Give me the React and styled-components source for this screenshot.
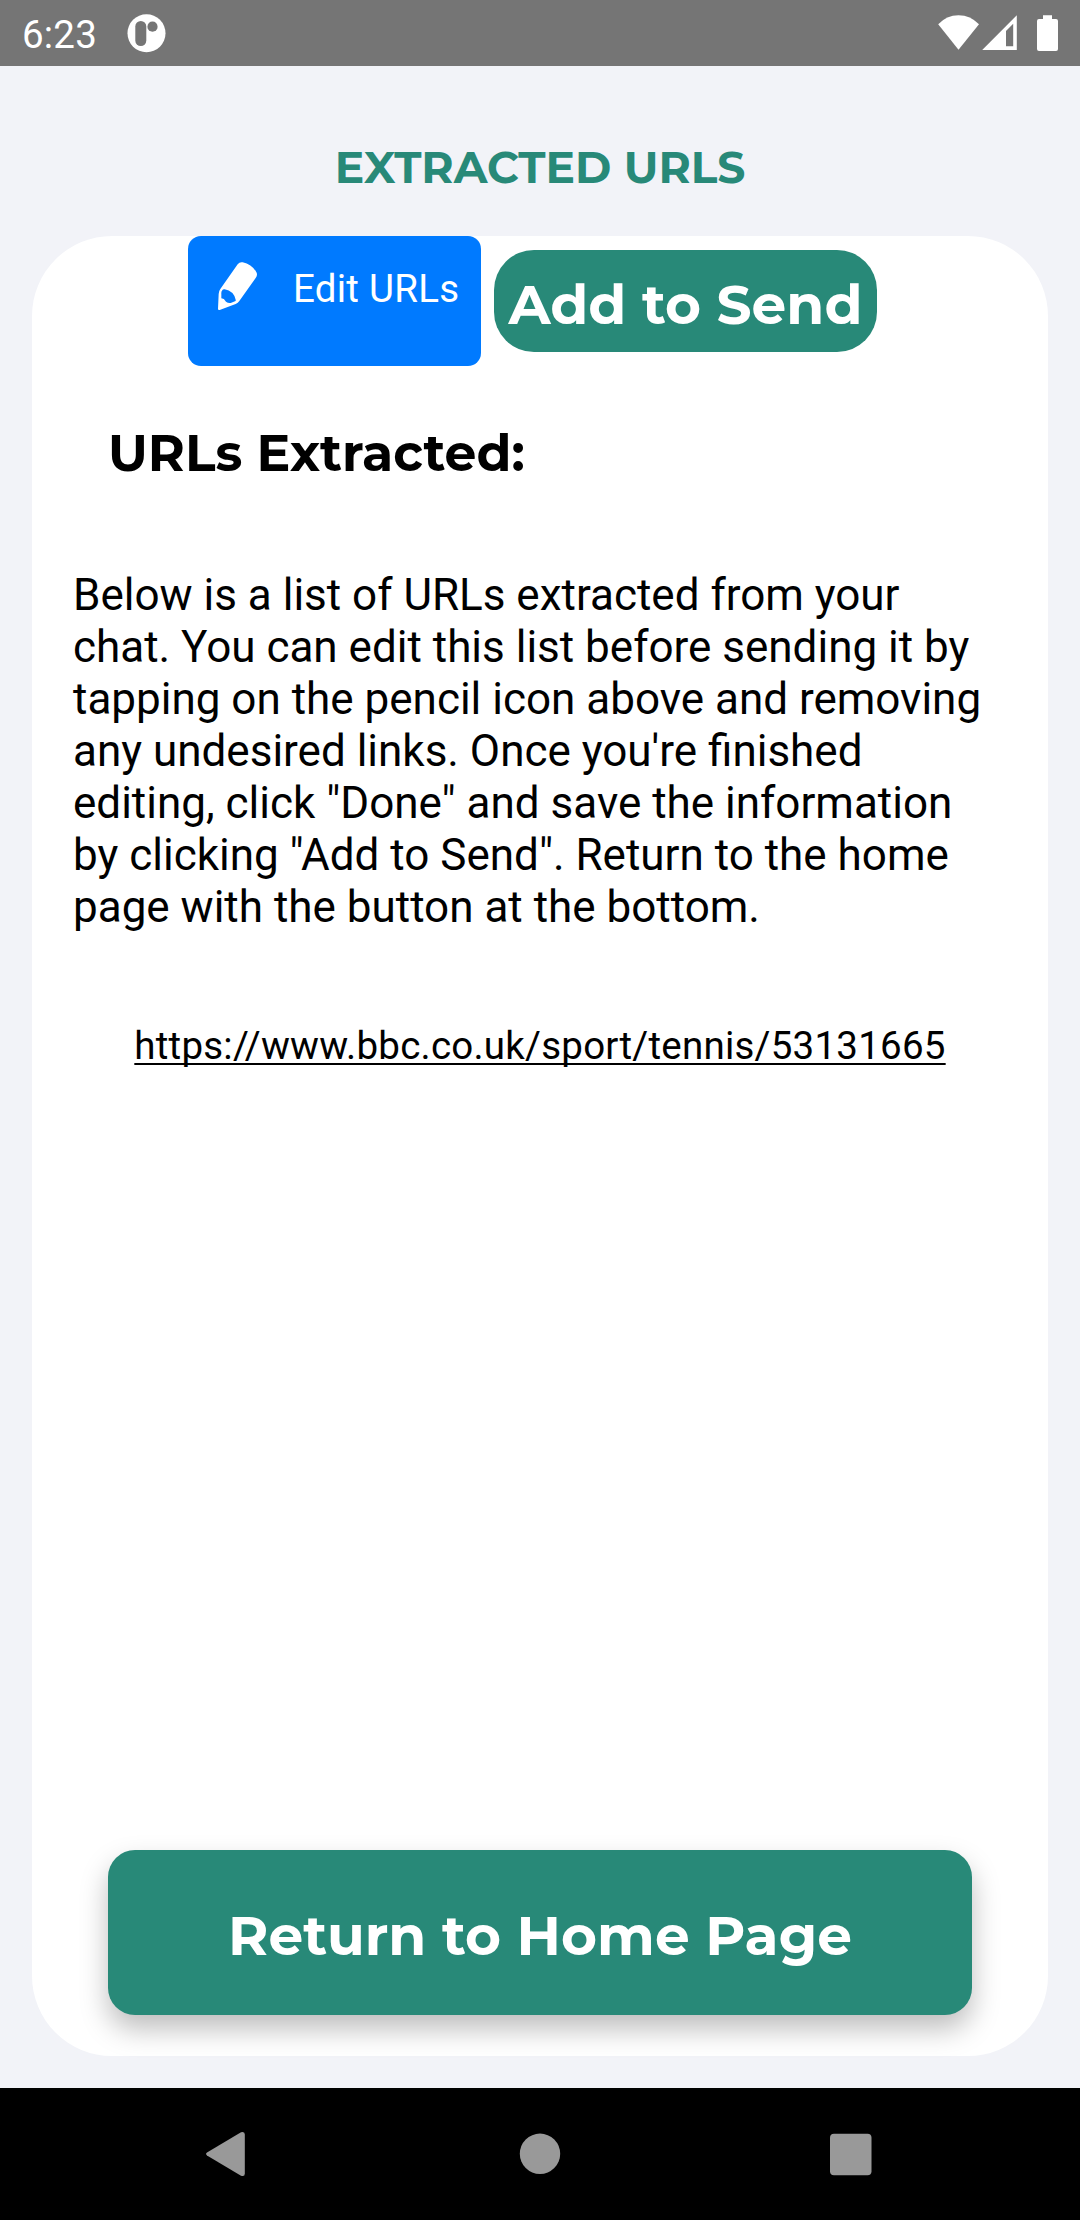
import React from "react";
import styled, { createGlobalStyle } from "styled-components";

const GREEN = "#288978";

const GlobalStyle = createGlobalStyle`
  *, *::before, *::after { box-sizing: border-box; }
  body { margin: 0; background: #f2f3f8; }
  h1, h2, p { margin: 0; }
`;

const Screen = styled.div`
  width: 1080px;
  height: 2220px;
  display: flex;
  flex-direction: column;
  background: #f2f3f8;
  color: #000;
  font-family: Roboto, "Liberation Sans", sans-serif;
`;

const StatusBar = styled.header`
  height: 66px;
  flex: none;
  display: flex;
  align-items: center;
  padding: 0 20px 0 22px;
  background: #757575;
  color: #fff;
`;

const Clock = styled.span`
  width: 105px;
  font-size: 38.5px;
  line-height: 45px;
  letter-spacing: 0.2px;
  padding-top: 2px;
`;

const StatusIcons = styled.div`
  display: flex;
  margin-left: auto;
`;

const Main = styled.main`
  flex: 1;
  display: flex;
  flex-direction: column;
  padding: 74px 32px 32px;
`;

const Title = styled.h1`
  font: 700 44px/54px Montserrat, Inter, sans-serif;
  color: ${GREEN};
  text-align: center;
  text-transform: uppercase;
`;

const Card = styled.section`
  flex: 1;
  display: flex;
  flex-direction: column;
  margin-top: 42px;
  padding-bottom: 41px;
  border-radius: 80px;
  background: #fff;
`;

const Actions = styled.div`
  display: flex;
  align-items: center;
  gap: 13px;
  height: 130px;
  padding-left: 156px;
`;

const Button = styled.button`
  display: flex;
  justify-content: center;
  border: 0;
  margin: 0;
  color: #fff;
  white-space: nowrap;
`;

const EditButton = styled(Button)`
  width: 293px;
  height: 130px;
  justify-content: flex-start;
  align-items: flex-start;
  gap: 35px;
  padding: 24px 0 0 29px;
  border-radius: 13px;
  background: #007aff;
  font: 400 38.5px/45px Roboto, sans-serif;
  letter-spacing: 0.25px;
`;

const EditLabel = styled.span`
  padding-top: 6px;
`;

const SolidButton = styled(Button)`
  background: ${GREEN};
  font: 700 55px/67px Montserrat, Inter, sans-serif;
`;

const SendButton = styled(SolidButton)`
  width: 383px;
  height: 102px;
  padding: 21px 0 0;
  border-radius: 40px;
`;

const HomeButton = styled(SolidButton)`
  height: 165px;
  margin: auto 76px 0;
  padding: 52px 0 0;
  border-radius: 27px;
  box-shadow: 0 14px 28px rgba(0, 0, 0, 0.26);
`;

const Heading = styled.h2`
  margin: 57px 0 0 76px;
  font: 700 50.5px/60px Montserrat, Inter, sans-serif;
`;

const Description = styled.p`
  width: 916px;
  margin: 86px 0 0 41px;
  font-size: 44px;
  line-height: 52px;
`;

const Link = styled.a`
  align-self: center;
  margin-top: 90px;
  font-size: 38.5px;
  line-height: 45px;
  letter-spacing: 0.23px;
  text-decoration: underline;
  text-decoration-thickness: 2px;
  text-decoration-skip-ink: none;
  text-underline-offset: 4px;
`;

const NavBar = styled.nav`
  height: 132px;
  flex: none;
  display: flex;
  align-items: center;
  gap: 264px;
  padding-left: 202px;
  background: #000;
`;

const PocketIcon = () => (
  <svg width="40" height="40" viewBox="0 0 40 40">
    <circle cx="19.5" cy="20.3" r="19" fill="#fff" />
    <rect x="8.3" y="8" width="11" height="25" rx="5.5" fill="#757575" />
    <circle cx="25.5" cy="13.7" r="5.1" fill="#757575" />
  </svg>
);

const SignalIcons = () => (
  <svg width="124" height="40" viewBox="936 13 124 40" fill="#fff">
    <path d="M938.2 24.3Q946.5 15.2 958.5 15.2T979 24.3L958.5 49.7Z" />
    <path fillRule="evenodd" d="M982.2 50L1016.8 15.2V50ZM1006 31V46.2H1013.2V23.8Z" />
    <path d="M1043 15.2H1052V19H1056Q1058 19 1058 21V49Q1058 51 1056 51H1039Q1037 51 1037 49V21Q1037 19 1039 19H1043Z" />
  </svg>
);

const PencilIcon = () => (
  <svg width="41" height="52" viewBox="141 120 123 156" fill="#fff">
    <path
      fillRule="evenodd"
      d="M144 267L146 222Q146 214 151 207L203 133Q209 125 218 127Q246 133 260 158Q263 166 257 174L208 243Q204 249 197 252L149 270Q144 271 144 267ZM158 209Q153 214 154 221V235Q162 235 168 245Q174 250 182 249L195 244Q198 242 197 239Q191 213 164 208Q160 207 158 209Z"
    />
  </svg>
);

const NavIcon = ({ children }) => (
  <svg width="48" height="48" viewBox="0 0 48 48" fill="#999">
    {children}
  </svg>
);

export default function App() {
  return (
    <Screen>
      <GlobalStyle />
      <StatusBar>
        <Clock>6:23</Clock>
        <PocketIcon />
        <StatusIcons>
          <SignalIcons />
        </StatusIcons>
      </StatusBar>
      <Main>
        <Title>Extracted URLs</Title>
        <Card>
          <Actions>
            <EditButton>
              <PencilIcon />
              <EditLabel>Edit URLs</EditLabel>
            </EditButton>
            <SendButton>Add to Send</SendButton>
          </Actions>
          <Heading>URLs Extracted:</Heading>
          <Description>
            Below is a list of URLs extracted from your chat. You can edit this list before sending it
            by tapping on the pencil icon above and removing any undesired links. Once you're finished
            editing, click "Done" and save the information by clicking "Add to Send". Return to the
            home page with the button at the bottom.
          </Description>
          <Link>https://www.bbc.co.uk/sport/tennis/53131665</Link>
          <HomeButton>Return to Home Page</HomeButton>
        </Card>
      </Main>
      <NavBar>
        <NavIcon>
          <path d="M5 22.6L39 2.3Q42.8 1 42.8 4.5V43.5Q42.8 47 39 45.7L5 25.4Q3 24 5 22.6Z" />
        </NavIcon>
        <NavIcon>
          <circle cx="26" cy="23.8" r="20.2" />
        </NavIcon>
        <NavIcon>
          <rect x="4" y="3.8" width="41.5" height="41.5" rx="4" />
        </NavIcon>
      </NavBar>
    </Screen>
  );
}
